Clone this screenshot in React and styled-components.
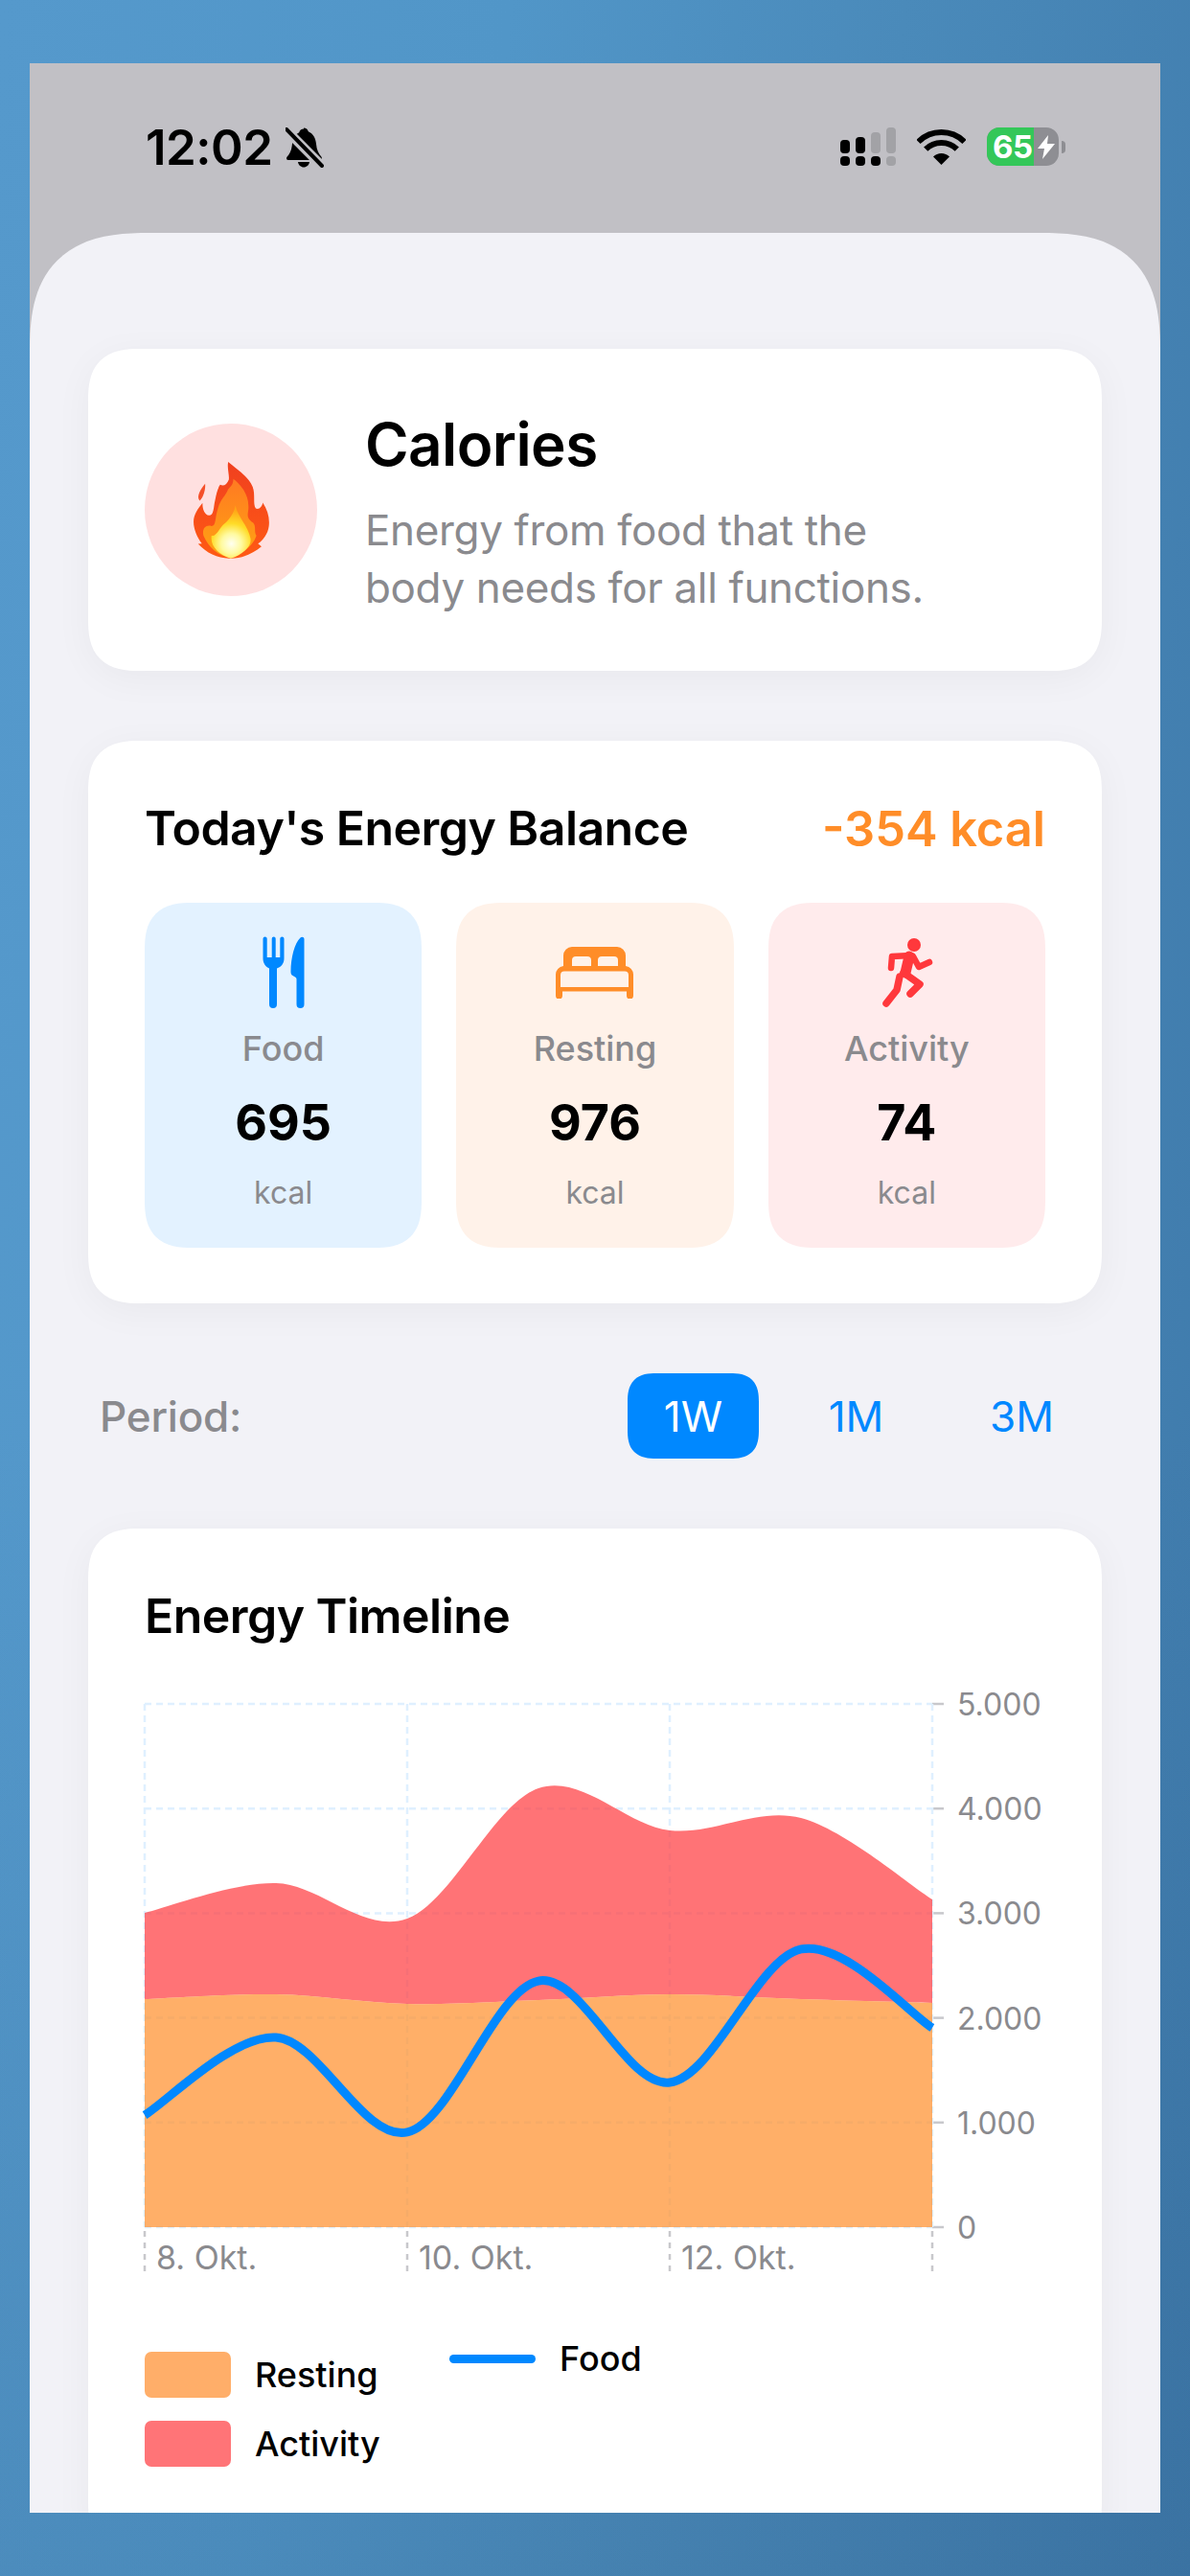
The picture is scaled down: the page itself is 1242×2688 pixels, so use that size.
import React from "react";
import styled, { createGlobalStyle } from "styled-components";

const GlobalStyle = createGlobalStyle`
  html, body {
    margin: 0;
    padding: 0;
    height: 2688px;
    overflow: hidden;
    font-family: Inter, "Liberation Sans", sans-serif;
  }
  * { box-sizing: border-box; }
`;

const BLUE = "#0088ff";
const ORANGE = "#ff8d28";
const RED = "#ff383c";
const GRAY = "#8a8a8e";

const DAYS = [0, 1, 2, 3, 4, 5, 6];
const FOOD = [1071, 1813, 907, 2353, 1383, 2656, 1905];
const RESTING = [2179, 2225, 2134, 2170, 2225, 2179, 2143];
const TOTAL = [3004, 3288, 2949, 4194, 3791, 3910, 3132];
const TICKS = [5000, 4000, 3000, 2000, 1000, 0];

const xAt = (i) => DAYS[i] * 137;
const yAt = (v) => 555 - v * 0.1092;

// catmull-rom through the points, one bezier per segment
function spline(values, reverse) {
  let pts = values.map((v, i) => [xAt(i), yAt(v)]);
  if (reverse) pts = pts.slice().reverse();
  let d = "";
  for (let i = 0; i < pts.length - 1; i++) {
    const p0 = pts[Math.max(i - 1, 0)];
    const p1 = pts[i];
    const p2 = pts[i + 1];
    const p3 = pts[Math.min(i + 2, pts.length - 1)];
    const c1x = p1[0] + (p2[0] - p0[0]) / 6;
    const c1y = p1[1] + (p2[1] - p0[1]) / 6;
    const c2x = p2[0] - (p3[0] - p1[0]) / 6;
    const c2y = p2[1] - (p3[1] - p1[1]) / 6;
    d += ` C${c1x} ${c1y} ${c2x} ${c2y} ${p2[0]} ${p2[1]}`;
  }
  return d;
}

const Page = styled.div`
  width: 1242px;
  height: 2688px;
  padding: 66px 31px 0;
  background:
    linear-gradient(180deg, rgba(40, 80, 120, 0) 55%, rgba(40, 80, 120, 0.16) 100%),
    linear-gradient(96deg, #5599cc 0%, #5196c8 35%, #4a8aba 62%, #3e79aa 100%);
`;

const Phone = styled.div`
  height: 2556px;
  background: #c1c0c5;
  overflow: hidden;
`;

const StatusBar = styled.div`
  height: 177px;
  padding: 67px 99px 0 121px;
  display: flex;
  justify-content: space-between;
  align-items: flex-start;
`;

const TimeGroup = styled.div`
  display: flex;
  align-items: center;
  gap: 13px;
  height: 42px;
`;

const Time = styled.span`
  font-size: 51px;
  font-weight: 600;
  letter-spacing: -0.5px;
  line-height: 42px;
  color: #000;
`;

const StatusIcons = styled.div`
  display: flex;
  align-items: center;
  gap: 22px;
  height: 40px;
`;

const Battery = styled.div`
  display: flex;
  width: 75px;
  height: 40px;
  border-radius: 13px;
  background: #8e8e93;
  overflow: hidden;
`;

const BatteryFill = styled.div`
  width: 49px;
  background: #34c759;
  color: #fff;
  font-size: 33px;
  font-weight: 700;
  line-height: 40px;
  padding-left: 6px;
  letter-spacing: -0.5px;
`;

const BatteryGroup = styled.div`
  display: flex;
  align-items: center;
  gap: 3px;
`;

const BatteryNub = styled.div`
  width: 4px;
  height: 13px;
  background: #8e8e93;
  border-radius: 0 6px 6px 0;
`;

const BoltIcon = styled.svg`
  margin: 8px 0 0 4px;
`;

const Sheet = styled.div`
  height: 2379px;
  padding: 121px 61px 0;
  background: #f2f2f7;
  border-radius: 125px 125px 0 0;
  corner-shape: superellipse(1.4);
  display: flex;
  flex-direction: column;
  gap: 73px;
`;

const Card = styled.div`
  background: #fff;
  border-radius: 54px;
  corner-shape: superellipse(1.4);
  box-shadow: 0 8px 40px rgba(0, 0, 0, 0.045);
  padding: ${(p) => p.$padding};
  flex: none;
`;

const IntroCard = styled(Card)`
  display: flex;
  align-items: center;
  gap: 50px;
  height: 336px;
`;

const IntroBody = styled.div`
  padding-top: 7px;
`;

const IconCircle = styled.div`
  width: 180px;
  height: 180px;
  flex: none;
  border-radius: 50%;
  background: #ffe0e0;
  display: flex;
  align-items: center;
  justify-content: center;
`;

const IntroTitle = styled.div`
  font-size: 62px;
  font-weight: 600;
  line-height: 72px;
  letter-spacing: -0.6px;
  color: #000;
  margin-bottom: 23px;
`;

const IntroText = styled.div`
  font-size: 44px;
  line-height: 60px;
  letter-spacing: -0.35px;
  color: ${GRAY};
`;

const CardHeader = styled.div`
  display: flex;
  justify-content: space-between;
  align-items: center;
  height: 64px;
`;

const CardTitle = styled.div`
  font-size: 50px;
  font-weight: 600;
  letter-spacing: -0.55px;
  color: #000;
`;

const Balance = styled.div`
  font-size: 50.500px;
  font-weight: 600;
  color: ${ORANGE};
`;

const Tiles = styled.div`
  display: grid;
  grid-template-columns: repeat(3, 1fr);
  gap: 36px;
  margin-top: 46px;
`;

const Tile = styled.div`
  height: 360px;
  padding-top: 35px;
  border-radius: 50px;
  corner-shape: superellipse(1.4);
  background: ${(p) => p.$tint};
  display: flex;
  flex-direction: column;
  align-items: center;
`;

const TileIcon = styled.div`
  height: 75px;
  display: flex;
  align-items: center;
  justify-content: center;
  margin-bottom: 20px;
`;

const TileLabel = styled.div`
  font-size: 36px;
  font-weight: 500;
  line-height: 44px;
  color: ${GRAY};
  margin-bottom: 26px;
`;

const TileValue = styled.div`
  font-size: 52px;
  font-weight: 700;
  line-height: 60px;
  color: #000;
  margin-bottom: 21px;
`;

const TileUnit = styled.div`
  font-size: 32px;
  line-height: 44px;
  color: ${GRAY};
`;

const PeriodRow = styled.div`
  height: 89px;
  padding: 0 12px;
  display: flex;
  align-items: center;
`;

const PeriodLabel = styled.div`
  flex: 1;
  font-size: 44px;
  font-weight: 500;
  letter-spacing: -0.2px;
  color: ${GRAY};
`;

const PeriodButtons = styled.div`
  display: flex;
  gap: 33px;
`;

const PeriodButton = styled.div`
  width: ${(p) => p.$width}px;
  height: 89px;
  border-radius: 30px;
  corner-shape: superellipse(1.4);
  display: flex;
  align-items: center;
  justify-content: center;
  font-size: 44px;
  font-weight: 400;
  background: ${(p) => (p.$active ? BLUE : "transparent")};
  color: ${(p) => (p.$active ? "#fff" : BLUE)};
`;

const ChartSvg = styled.svg`
  display: block;
  margin-top: 51px;
  overflow: visible;
`;

const AxisText = styled.text`
  font-family: Inter, "Liberation Sans", sans-serif;
  font-size: ${(p) => p.$size}px;
  fill: ${GRAY};
`;

const Legend = styled.div`
  display: flex;
  margin-top: 58px;
  padding-bottom: 90px;
`;

const LegendColumn = styled.div`
  width: ${(p) => p.$width};
  padding-top: ${(p) => p.$top};
  display: flex;
  flex-direction: column;
  gap: 24px;
`;

const LegendItem = styled.div`
  display: flex;
  align-items: center;
  gap: 25px;
  height: 48px;
  font-size: 36px;
  font-weight: 500;
  color: #000;
`;

const Swatch = styled.div`
  width: 90px;
  height: 48px;
  border-radius: 7px;
  background: ${(p) => p.$color};
`;

const LegendLine = styled.div`
  width: 90px;
  height: 9px;
  border-radius: 5px;
  background: ${BLUE};
`;

function BellSlash() {
  return (
    <svg width="40" height="42" viewBox="0 0 40 42">
      <path d="M19 0.5c2.5 0 4.3 1.5 4.8 3.7c5 2 7.7 7 8.2 13c.5 6 2.5 10 5.5 13.5c.8 1 .5 3.3-1.5 3.3H3c-2 0-2.5-2-1.5-3.3c2.7-3 4.6-6.5 5.2-11.5c.7-6.500 3-12 7.500-14c.5-2.200 2.300-3.700 4.800-3.700Z" />
      <path d="M13 36h12c-.5 3.200-3 5.500-6 5.500s-5.500-2.300-6-5.500Z" />
      <path d="M0 2L39 41" stroke="#c1c0c5" strokeWidth="10" />
      <path d="M1 2L38 40" stroke="#000" strokeWidth="4" strokeLinecap="round" />
    </svg>
  );
}

function Signal() {
  const bars = [
    [0, 13, 14, "#000"], [16, 10, 17, "#000"], [32, 5, 22, "#a2a2a6"], [48, 0, 27, "#a2a2a6"],
  ];
  const dots = ["#000", "#000", "#000", "#a2a2a6"];
  return (
    <svg width="58" height="40" viewBox="0 0 58 40">
      {bars.map((b) => (
        <rect key={b[0]} x={b[0]} y={b[1]} width="10" height={b[2]} rx="4" fill={b[3]} />
      ))}
      {dots.map((c, i) => (
        <rect key={i} x={i * 16} y="30" width="10" height="10" rx="4" fill={c} />
      ))}
    </svg>
  );
}

function Wifi() {
  return (
    <svg width="51" height="37" viewBox="0 0 51 37" fill="none">
      <path d="M1.500 13A34 34 0 0 1 49.500 13" stroke="#000" strokeWidth="6" />
      <path d="M9.200 20.700A23 23 0 0 1 41.800 20.700" stroke="#000" strokeWidth="6" />
      <path d="M25.500 37L17 28.500A12 12 0 0 1 34 28.500Z" fill="#000" />
    </svg>
  );
}

function Flame() {
  return (
    <svg width="79" height="101" viewBox="214 185 236 302">
      <defs>
        <linearGradient id="flameOuter" x1="0" y1="0" x2="0" y2="1">
          <stop offset="0" stopColor="#f0401f" />
          <stop offset="1" stopColor="#ff5a14" />
        </linearGradient>
        <linearGradient id="flameMid" x1="0" y1="0" x2="0" y2="1">
          <stop offset="0" stopColor="#ff7a22" />
          <stop offset="1" stopColor="#ffa312" />
        </linearGradient>
        <radialGradient id="flameCore" gradientUnits="userSpaceOnUse" cx="332" cy="440" r="105">
          <stop offset="0" stopColor="#fffff0" />
          <stop offset="0.3" stopColor="#fffaa0" />
          <stop offset="0.6" stopColor="#ffdc28" />
          <stop offset="1" stopColor="#ffa516" />
        </radialGradient>
      </defs>
      <path fill="#f4502a" d="M250 253C252 270 245 295 233 306C226 298 226 282 250 253Z" />
      <path fill="url(#flameOuter)" d="M322 185C345 205 385 230 398 262C408 285 398 315 408 330C418 335 428 325 430 312C445 335 452 360 449 385C446 410 430 430 415 440L426 449C400 470 365 487 328 486C290 487 255 470 228 441L240 440C225 420 214 395 214 372C214 350 228 330 242 313C241 330 248 350 262 352C278 352 276 325 281 305C285 285 290 265 297 256C308 262 318 255 324 240C326 225 318 205 322 185Z" />
      <path fill="url(#flameMid)" d="M338 238C360 255 385 285 385 320C388 345 372 355 400 375C410 385 402 405 410 415C400 445 370 470 330 484C290 478 260 450 245 415C240 395 250 380 270 385C285 385 280 360 290 330C298 300 315 290 322 270C330 262 338 255 338 238Z" />
      <path fill="url(#flameCore)" d="M345 320C348 350 385 385 392 425C395 450 365 475 330 486C295 475 265 450 270 415C285 420 295 390 310 378C325 365 340 345 345 320Z" />
    </svg>
  );
}

function ForkKnife() {
  return (
    <svg width="60" height="75" viewBox="5.500 11 60 75" fill={BLUE}>
      <path d="M14 13.500a2.100 2.100 0 0 1 4.200 0V33h5V13.500a2 2 0 0 1 4 0V33h4.600V13.500a2.100 2.100 0 0 1 4.200 0V34c0 5.500-3 9-7.500 10.500V82a4 4 0 0 1-8 0V44.500C17 43 14 39.500 14 34Z" />
      <path d="M57 14V82a4 4 0 0 1-8 0V56c0-1-.5-2-1.500-2.500L45 52c-1.500-.8-2-2-2-4C43 33 47 18 53 12.500c1.500-1.500 4-.8 4 1.500Z" />
    </svg>
  );
}

function Bed() {
  return (
    <svg width="81" height="54" viewBox="5 17 81 54" fill={ORANGE}>
      <path
        fillRule="evenodd"
        d="M13 37V26a9 9 0 0 1 9-9H69a9 9 0 0 1 9 9V37a9 9 0 0 1 8 9V68a3.500 3.500 0 0 1-7 0V63.500H12V68a3.500 3.500 0 0 1-7 0V46a9 9 0 0 1 8-9Z M22 37V31a4 4 0 0 1 4-4H38a4 4 0 0 1 4 4V37Z M49 37V31a4 4 0 0 1 4-4H66a4 4 0 0 1 4 4V37Z M14 42.500a4 4 0 0 0-4 4V59H81V46.500a4 4 0 0 0-4-4Z"
      />
    </svg>
  );
}

function Runner() {
  return (
    <svg width="60" height="75" viewBox="0 0 60 75" fill="none" stroke={RED} strokeLinecap="round" strokeLinejoin="round">
      <circle cx="38" cy="9" r="7" fill={RED} stroke="none" />
      <path d="M35 20L15 21L14 33" strokeWidth="6.500" />
      <path d="M33 21L29 38" strokeWidth="11" />
      <path d="M37 21L43 32L54 27" strokeWidth="6.500" />
      <path d="M27 38L44 50L34 60" strokeWidth="7.500" />
      <path d="M23 42L20 56L9 70" strokeWidth="7.500" />
    </svg>
  );
}

function Chart() {
  const total = spline(TOTAL);
  const restTop = spline(RESTING);
  const restBack = spline(RESTING, true);
  const grid = "#dff0ff";
  return (
    <ChartSvg width="939" height="610" viewBox="0 0 939 610">
      {TICKS.map((t) => (
        <g key={t}>
          <line x1="0" x2="822" y1={yAt(t)} y2={yAt(t)} stroke={grid} strokeWidth="2.500" strokeDasharray="7 5" />
          <line x1="822" x2="834" y1={yAt(t)} y2={yAt(t)} stroke="#c8c8cc" strokeWidth="2.500" />
          <AxisText $size="32" x="848" y={yAt(t) + 12}>{t === 0 ? "0" : t.toLocaleString("de-DE")}</AxisText>
        </g>
      ))}
      {[0, 274, 548, 822].map((x) => (
        <g key={x}>
          <line x1={x} x2={x} y1="9" y2="555" stroke={grid} strokeWidth="2.500" strokeDasharray="7 5" />
          <line x1={x} x2={x} y1="555" y2="603" stroke="#c8c8cc" strokeWidth="2.500" strokeDasharray="6 6" strokeDashoffset="-4" />
        </g>
      ))}
      <path
        d={`M${xAt(0)} ${yAt(TOTAL[0])}${total} L${xAt(6)} ${yAt(RESTING[6])}${restBack} Z`}
        fill={RED}
        fillOpacity="0.7"
      />
      <path
        d={`M${xAt(0)} ${yAt(RESTING[0])}${restTop} L${xAt(6)} 555 L0 555 Z`}
        fill={ORANGE}
        fillOpacity="0.7"
      />
      <path d={`M${xAt(0)} ${yAt(FOOD[0])}${spline(FOOD)}`} fill="none" stroke={BLUE} strokeWidth="9" />
      <AxisText $size="34" x="12" y="599">8. Okt.</AxisText>
      <AxisText $size="34" x="286" y="599">10. Okt.</AxisText>
      <AxisText $size="34" x="560" y="599">12. Okt.</AxisText>
    </ChartSvg>
  );
}

export default function App() {
  return (
    <Page>
      <GlobalStyle />
      <Phone>
        <StatusBar>
          <TimeGroup>
            <Time>12:02</Time>
            <BellSlash />
          </TimeGroup>
          <StatusIcons>
            <Signal />
            <Wifi />
            <BatteryGroup>
              <Battery>
                <BatteryFill>65</BatteryFill>
                <BoltIcon width="18" height="25" viewBox="0 0 18 25">
                  <path d="M11 0L0 14H7L5 25L18 9H10Z" fill="#fff" />
                </BoltIcon>
              </Battery>
              <BatteryNub />
            </BatteryGroup>
          </StatusIcons>
        </StatusBar>
        <Sheet>
          <IntroCard $padding="0 59px">
            <IconCircle>
              <Flame />
            </IconCircle>
            <IntroBody>
              <IntroTitle>Calories</IntroTitle>
              <IntroText>
                Energy from food that the
                <br />
                body needs for all functions.
              </IntroText>
            </IntroBody>
          </IntroCard>

          <Card $padding="59px 59px 58px">
            <CardHeader>
              <CardTitle>Today's Energy Balance</CardTitle>
              <Balance>-354 kcal</Balance>
            </CardHeader>
            <Tiles>
              <Tile $tint="#e3f2ff">
                <TileIcon><ForkKnife /></TileIcon>
                <TileLabel>Food</TileLabel>
                <TileValue>695</TileValue>
                <TileUnit>kcal</TileUnit>
              </Tile>
              <Tile $tint="#fff2e9">
                <TileIcon><Bed /></TileIcon>
                <TileLabel>Resting</TileLabel>
                <TileValue>976</TileValue>
                <TileUnit>kcal</TileUnit>
              </Tile>
              <Tile $tint="#ffebec">
                <TileIcon><Runner /></TileIcon>
                <TileLabel>Activity</TileLabel>
                <TileValue>74</TileValue>
                <TileUnit>kcal</TileUnit>
              </Tile>
            </Tiles>
          </Card>

          <PeriodRow>
            <PeriodLabel>Period:</PeriodLabel>
            <PeriodButtons>
              <PeriodButton $width={137} $active>1W</PeriodButton>
              <PeriodButton $width={137}>1M</PeriodButton>
              <PeriodButton $width={143}>3M</PeriodButton>
            </PeriodButtons>
          </PeriodRow>

          <Card $padding="59px 59px 0">
            <CardHeader>
              <CardTitle>Energy Timeline</CardTitle>
            </CardHeader>
            <Chart />
            <Legend>
              <LegendColumn $width="318px" $top="17px">
                <LegendItem><Swatch $color="#ffae69" />Resting</LegendItem>
                <LegendItem><Swatch $color="#ff7477" />Activity</LegendItem>
              </LegendColumn>
              <LegendColumn $width="auto" $top="0">
                <LegendItem><LegendLine />Food</LegendItem>
              </LegendColumn>
            </Legend>
          </Card>
        </Sheet>
      </Phone>
    </Page>
  );
}
